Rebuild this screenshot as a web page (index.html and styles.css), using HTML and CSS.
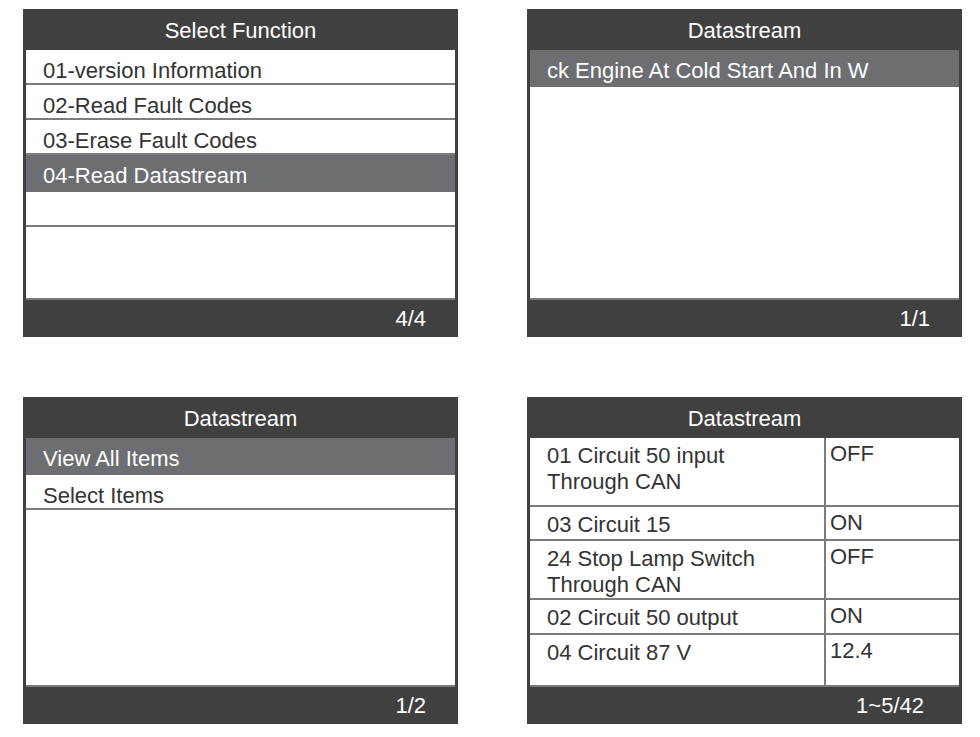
FILE: index.html
```html
<!DOCTYPE html>
<html>
<head>
<meta charset="utf-8">
<link rel="stylesheet" href="styles.css">
</head>
<body>
<div class="page">
  <section class="panel">
    <div class="head">Select Function</div>
    <div class="body">
      <div class="item">01-version Information</div>
      <div class="item">02-Read Fault Codes</div>
      <div class="item">03-Erase Fault Codes</div>
      <div class="item sel">04-Read Datastream</div>
      <div class="item"></div>
    </div>
    <div class="foot">4/4</div>
  </section>

  <section class="panel">
    <div class="head">Datastream</div>
    <div class="body">
      <div class="item sel">ck Engine At Cold Start And In W</div>
    </div>
    <div class="foot">1/1</div>
  </section>

  <section class="panel">
    <div class="head">Datastream</div>
    <div class="body">
      <div class="item sel">View All Items</div>
      <div class="item">Select Items</div>
    </div>
    <div class="foot">1/2</div>
  </section>

  <section class="panel">
    <div class="head">Datastream</div>
    <div class="body table">
      <div class="label">01 Circuit 50 input<br>Through CAN</div>
      <div class="value">OFF</div>
      <div class="label">03 Circuit 15</div>
      <div class="value">ON</div>
      <div class="label">24 Stop Lamp Switch<br>Through CAN</div>
      <div class="value">OFF</div>
      <div class="label">02 Circuit 50 output</div>
      <div class="value">ON</div>
      <div class="label last">04 Circuit 87 V</div>
      <div class="value last">12.4</div>
    </div>
    <div class="foot wide">1~5/42</div>
  </section>
</div>
</body>
</html>
```

FILE: styles.css
```css
html, body {
  margin: 0;
  padding: 0;
  background: #ffffff;
}

body {
  font-family: "Liberation Sans", Arial, sans-serif;
  font-size: 22px;
}

.page {
  display: grid;
  grid-template-columns: 435px 435px;
  grid-template-rows: 328px 327px;
  column-gap: 69px;
  row-gap: 60px;
  padding: 9px 0 0 23px;
}

.panel {
  display: flex;
  flex-direction: column;
  background: #404040;
  padding: 0 3px;
  box-sizing: border-box;
}

.head {
  height: 41px;
  flex: 0 0 41px;
  display: flex;
  align-items: center;
  justify-content: center;
  color: #ffffff;
  line-height: 24px;
  padding-top: 2px;
  box-sizing: border-box;
}

.body {
  flex: 1 1 auto;
  background: #ffffff;
  border-bottom: 2px solid #7a7a7a;
  overflow: hidden;
}

.item {
  height: 35px;
  box-sizing: border-box;
  padding: 9px 0 0 17px;
  line-height: 24px;
  color: #333333;
  border-bottom: 2px solid #7d7d7d;
  white-space: nowrap;
}

.item.sel {
  height: 37px;
  background: #6c6e71;
  color: #ffffff;
  border-bottom: none;
}

.foot {
  flex: 0 0 37px;
  display: flex;
  align-items: center;
  justify-content: flex-end;
  padding-right: 29px;
  padding-top: 1px;
  box-sizing: border-box;
  color: #ffffff;
  line-height: 24px;
}

.foot.wide {
  padding-right: 35px;
}

.table {
  display: grid;
  grid-template-columns: 296px 1fr;
  grid-template-rows: 69px 34px 59px 35px 1fr;
}

.label,
.value {
  box-sizing: border-box;
  border-bottom: 2px solid #7d7d7d;
  color: #333333;
  line-height: 26px;
}

.label {
  padding: 5px 0 0 17px;
  border-right: 2px solid #7d7d7d;
}

.value {
  padding: 3px 0 0 4px;
}

.label.last,
.value.last {
  border-bottom: none;
}
```
